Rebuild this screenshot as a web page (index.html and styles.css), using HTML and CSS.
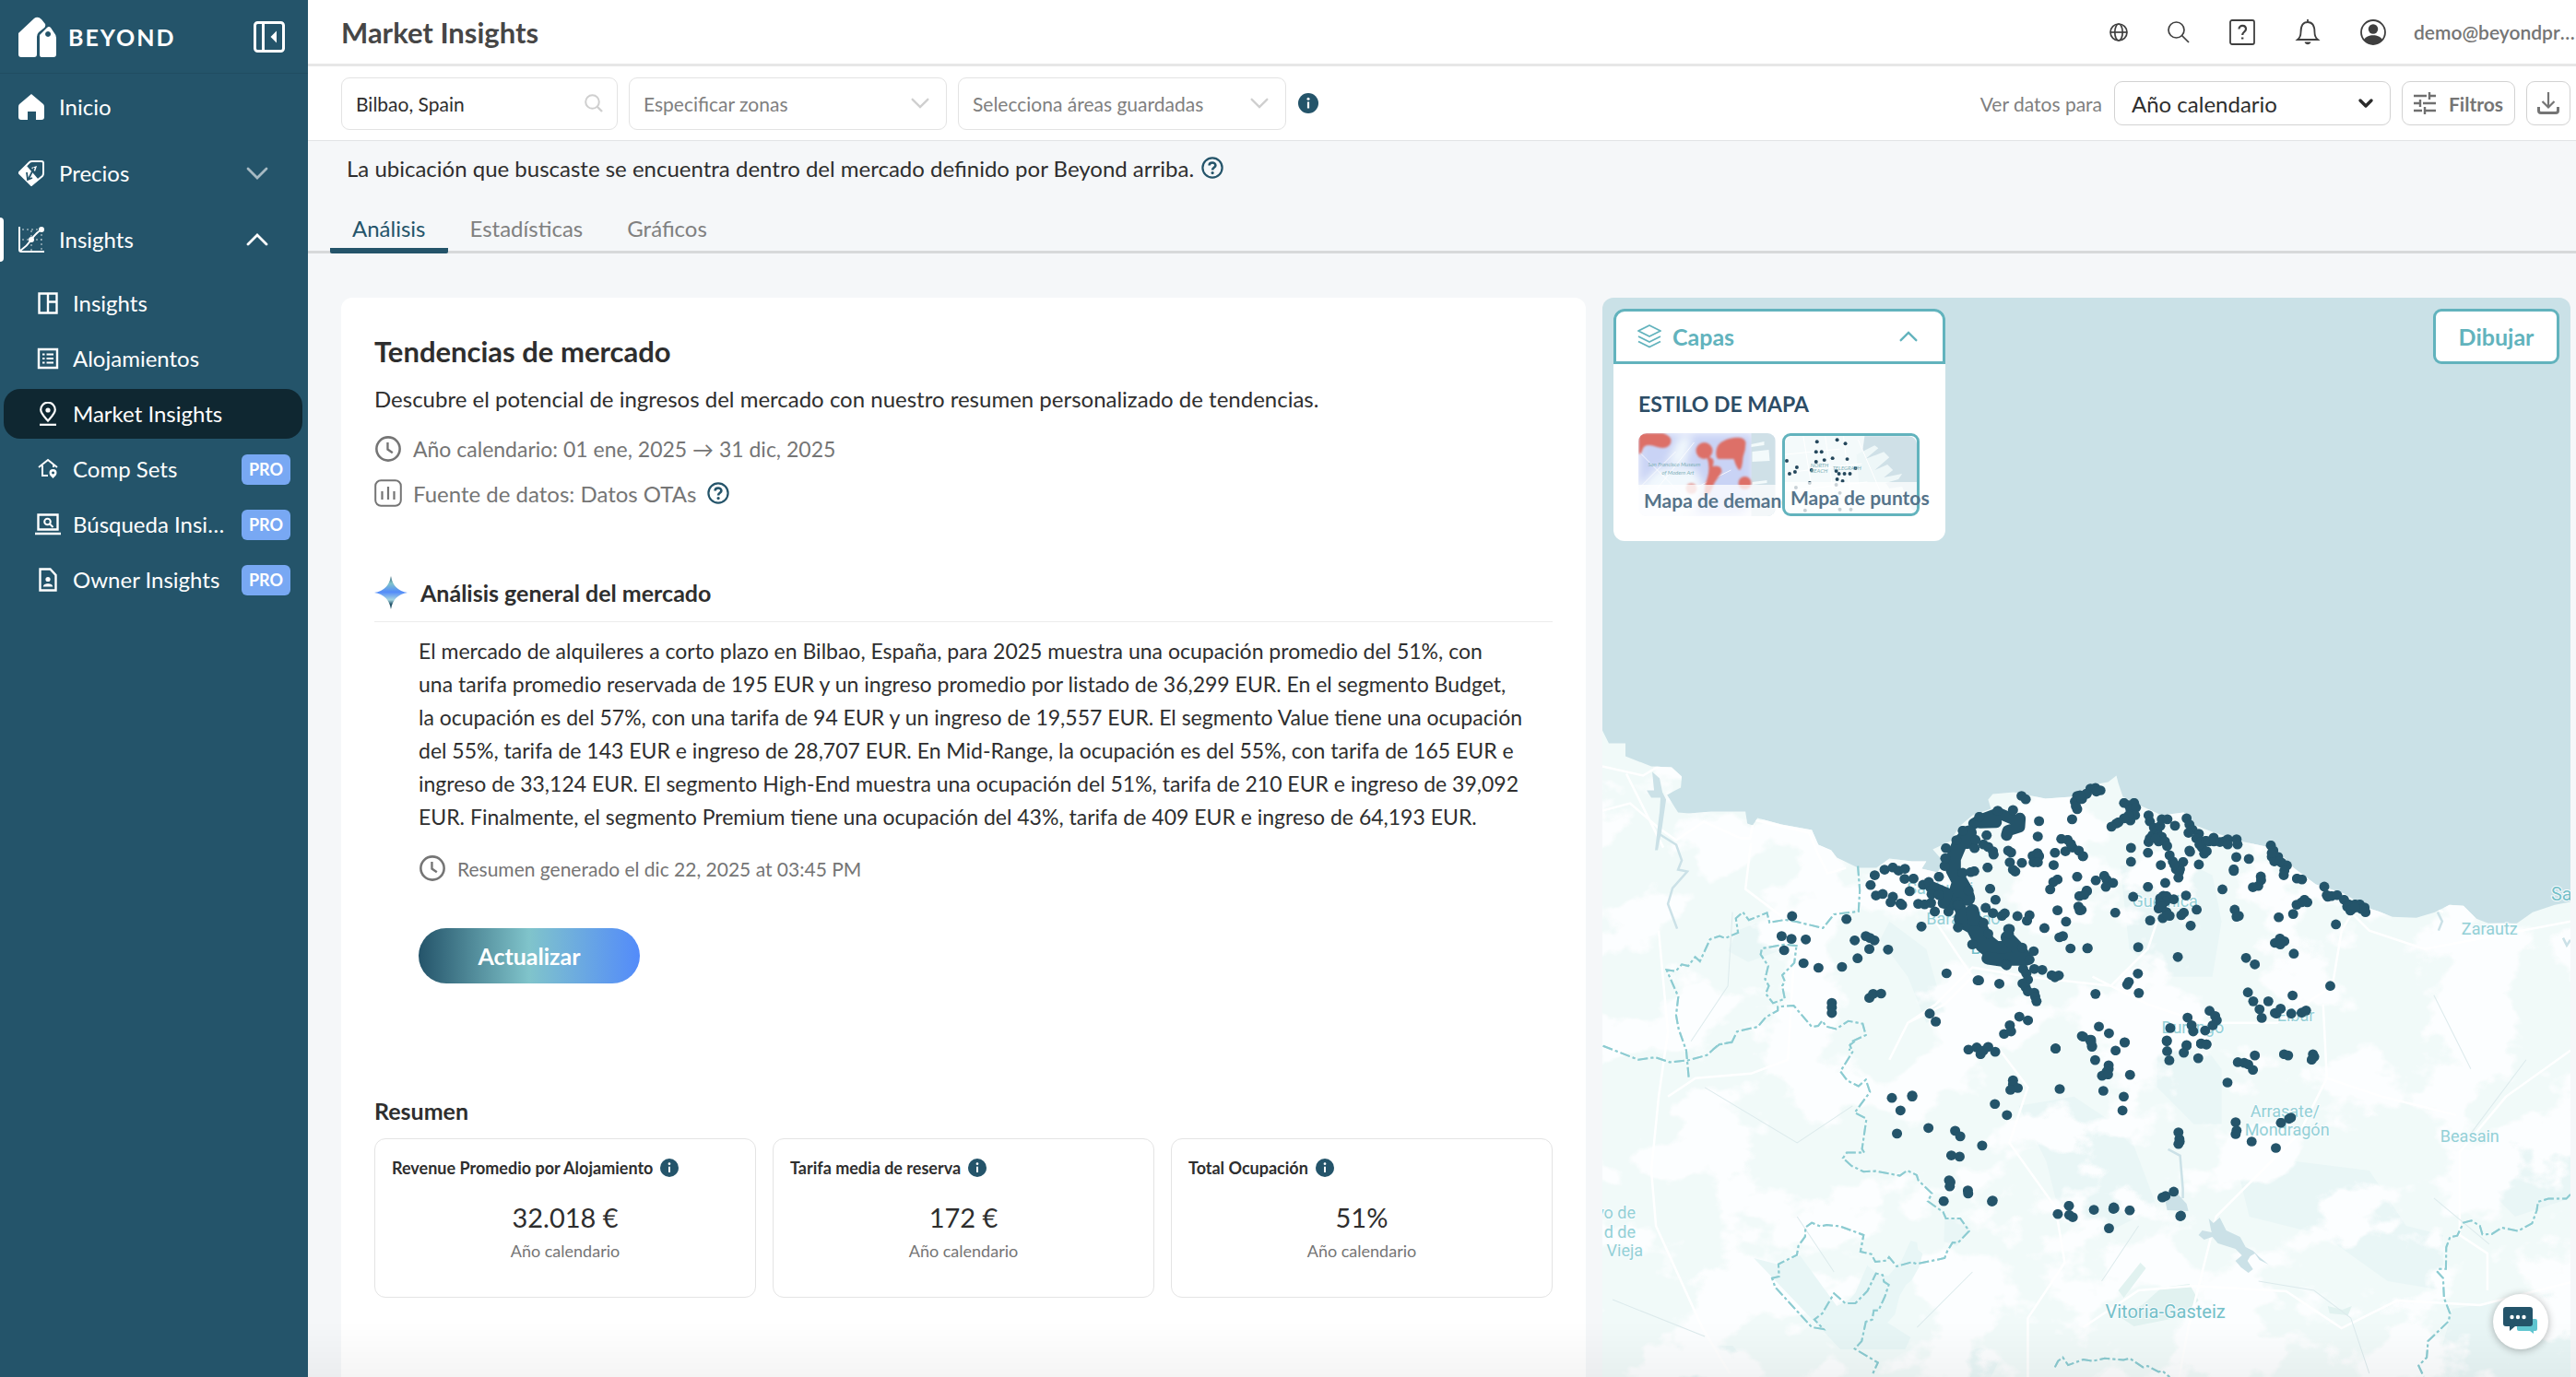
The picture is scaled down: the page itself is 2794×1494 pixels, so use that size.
FILE: index.html
```html
<!DOCTYPE html>
<html lang="es">
<head>
<meta charset="utf-8">
<title>Market Insights</title>
<link rel="stylesheet" href="styles.css">
</head>
<body>
<svg class="defs" aria-hidden="true">
  <symbol id="i-info" viewBox="0 0 22 22"><circle cx="11" cy="11" r="11" fill="#24546a"/><path d="M11 9.500v7" stroke="#fff" stroke-width="2.200"/><circle cx="11" cy="6.200" r="1.500" fill="#fff"/></symbol>
  <symbol id="i-help" viewBox="0 0 24 24"><circle cx="12" cy="12" r="10.600" fill="none" stroke="#24546a" stroke-width="2.200"/><path d="M8.600 9.600c0-4 6.800-4 6.800-.200 0 2.400-3.300 2.400-3.300 5" fill="none" stroke="#24546a" stroke-width="2.600"/><circle cx="12.100" cy="17.600" r="1.600" fill="#24546a"/></symbol>
  <symbol id="i-clock" viewBox="0 0 28 28"><circle cx="14" cy="14" r="11.800" fill="none" stroke="#757575" stroke-width="2.400"/><path d="M13.500 7.500v7l5 3.500" fill="none" stroke="#757575" stroke-width="2.200"/></symbol>
  <symbol id="i-down" viewBox="0 0 24 24"><path d="M2 7l10 10L22 7" fill="none" stroke="currentColor" stroke-width="2.800" stroke-linecap="round"/></symbol>
</svg>
<div class="app">
  <aside class="sidebar">
    <div class="brand">
      <svg class="brand-mark" viewBox="0 0 42 44"><path d="M0 18 17 2q4-3 8 1l4 5q1 3-2 5l-5 4q-2 2-2 5v19q0 3-3 3H3q-3 0-3-3z" fill="#fff"/><path fill-rule="evenodd" d="M23 20l8-8q2-2 4 0l4 6q2 2 2 5v18q0 3-3 3H25q-2 0-2-3zM32 16a3 3 0 1 0 .1 0z" fill="#fff"/></svg>
      <span class="brand-name">BEYOND</span>
      <button class="collapse" aria-label="Contraer menú"><svg viewBox="0 0 34 34"><rect x="1.500" y="1.500" width="31" height="31" rx="3" fill="none" stroke="#fff" stroke-width="3"/><path d="M10.500 2v30" stroke="#fff" stroke-width="3"/><path d="M25 10.500v13L18.500 17z" fill="#fff"/></svg></button>
    </div>
    <nav class="nav">
      <a class="nav-item" href="#"><svg viewBox="0 0 28 28"><path d="M14 0 27 11q1 1 1 3v11q0 3-3 3h-6v-9h-9v9H3q-3 0-3-3V14q0-2 1-3z" fill="#fff"/></svg><span>Inicio</span></a>
      <a class="nav-item" href="#"><svg viewBox="0 0 28 28"><path d="M1 13 12 2q1-1 3-1h10q2 0 2 2v11q0 2-1 3L14 27 1 14z" fill="none" stroke="#fff" stroke-width="2"/><path d="M1 13.500 9 6l13 15-8 6.500z" fill="#fff"/><path d="M20 6l-2 6-4-4zM9 16l5 4-5 1z" fill="#fff"/><path d="M17 8l-6 12M9 13l1 8 5-2" stroke="#24546a" stroke-width="1.800" fill="none"/></svg><span>Precios</span><svg class="chev dim"><use href="#i-down"/></svg></a>
      <a class="nav-item open" href="#"><svg viewBox="0 0 28 28"><path d="M1 0v25q0 2 2 2h25M2 26C8 22 10 20 14 14S20 6 25 3" fill="none" stroke="#fff" stroke-width="2"/><circle cx="14" cy="14" r="3" fill="#fff"/><circle cx="25" cy="3" r="3" fill="#fff"/><path d="M4 3h18M4 14h21M14 4v22M25 8v18" stroke="#fff" stroke-dasharray="2 3" fill="none" opacity=".8"/></svg><span>Insights</span><svg class="chev up"><use href="#i-down"/></svg></a>
      <a class="sub-item" href="#"><svg viewBox="0 0 24 24"><path d="M2.500 1.500h19v21h-19zM12 1.500v21M12 10.500h9.500" fill="none" stroke="#fff" stroke-width="2.400"/></svg><span>Insights</span></a>
      <a class="sub-item" href="#"><svg viewBox="0 0 24 24"><path d="M2 2h20v20H2z" fill="none" stroke="#fff" stroke-width="2.400"/><path d="M6 7.500h2.500M6 12h2.500M6 16.500h2.500M10.500 7.500H18M10.500 12H18M10.500 16.500H18" stroke="#fff" stroke-width="2.200"/></svg><span>Alojamientos</span></a>
      <a class="sub-item active" href="#"><svg viewBox="0 0 24 26"><path d="M12 20.500c-4.500-5-7.800-8-7.800-12a7.800 7.800 0 0 1 15.600 0c0 4-3.300 7-7.800 12z" fill="none" stroke="#fff" stroke-width="2.200"/><circle cx="12" cy="9" r="2.600" fill="#fff"/><path d="M3 24.800h18" stroke="#fff" stroke-width="2.200"/></svg><span>Market Insights</span></a>
      <a class="sub-item" href="#"><svg viewBox="0 0 24 24"><path d="M2 10l10-8 10 8M6 8v11h6M18 7v3" fill="none" stroke="#fff" stroke-width="2"/><path fill-rule="evenodd" d="M17.500 22c-2.500-2.500-4-3.800-4-6a4 4 0 0 1 8 0c0 2.200-1.500 3.500-4 6zM17.500 14.500a1.500 1.500 0 1 0 .1 0z" fill="#fff"/></svg><span>Comp Sets</span><b class="pro">PRO</b></a>
      <a class="sub-item" href="#"><svg class="wide" viewBox="0 0 28 24"><path d="M3.500 1.500h21v16h-21zM0 22h28" fill="none" stroke="#fff" stroke-width="2.400"/><circle cx="13.500" cy="9" r="3.300" fill="none" stroke="#fff" stroke-width="2"/><path d="M16 11.500l3.500 3.500" stroke="#fff" stroke-width="2"/></svg><span>Búsqueda Insights</span><b class="pro">PRO</b></a>
      <a class="sub-item" href="#"><svg viewBox="0 0 24 26"><path d="M3.500 1.500h11l6 6.500v16.500h-17z" fill="none" stroke="#fff" stroke-width="2.400"/><circle cx="12" cy="12.500" r="2.600" fill="#fff"/><path d="M6.800 20.500c0-4.500 10.400-4.500 10.400 0z" fill="#fff"/></svg><span>Owner Insights</span><b class="pro">PRO</b></a>
    </nav>
  </aside>

  <main class="main">
    <header class="topbar">
      <h1>Market Insights</h1>
      <div class="top-icons">
        <button aria-label="Idioma"><svg class="s20" viewBox="0 0 20 20" fill="none" stroke="#3f3f3f" stroke-width="1.700"><circle cx="10" cy="10" r="9"/><ellipse cx="10" cy="10" rx="4.200" ry="9"/><path d="M1 10h18"/></svg></button>
        <button aria-label="Buscar"><svg class="s24" viewBox="0 0 24 24" fill="none" stroke="#3f3f3f" stroke-width="1.700"><circle cx="9.500" cy="9.500" r="8.500"/><path d="M15.500 15.500 23 23"/></svg></button>
        <button aria-label="Ayuda"><svg class="s28" viewBox="0 0 28 28" fill="none" stroke="#3f3f3f" stroke-width="1.800"><rect x="1" y="1" width="26" height="26" rx="2"/><path d="M10.500 10.500c0-5 7.500-4.500 7.500 0 0 3-3.800 3-3.800 6.500" stroke-width="2.200"/><path d="M13 19.500h2.400v2H13z" fill="#3f3f3f" stroke="none"/></svg></button>
        <button aria-label="Notificaciones"><svg class="s28" viewBox="0 0 28 28" fill="none" stroke="#3f3f3f" stroke-width="1.800"><path d="M3 22c2.500-2 3.500-4 3.500-8 0-7 2.500-11 7.500-11s7.500 4 7.500 11c0 4 1 6 3.500 8zM14 0v3"/><path d="M10.500 24.500h7c-1 3.500-6 3.500-7 0z" fill="#3f3f3f" stroke="none"/></svg></button>
        <button aria-label="Cuenta"><svg class="s28" viewBox="0 0 28 28"><circle cx="14" cy="14" r="13" fill="none" stroke="#3f3f3f" stroke-width="1.800"/><circle cx="14" cy="10.500" r="5.200" fill="#3f3f3f"/><path d="M4 22c3-6.500 17-6.500 20 0-4 6.500-16 6.500-20 0z" fill="#3f3f3f"/></svg></button>
      </div>
      <a class="account" href="#">demo@beyondpricing.com</a>
    </header>

    <div class="filters">
      <label class="field search"><input type="text" value="Bilbao, Spain" aria-label="Mercado"><svg viewBox="0 0 20 20"><circle cx="8.500" cy="8.500" r="7.300" fill="none" stroke="#cfcfcf" stroke-width="2"/><path d="M13.500 13.500 19 19" stroke="#cfcfcf" stroke-width="2.400"/></svg></label>
      <label class="field zones"><select aria-label="Zonas"><option>Especificar zonas</option></select><svg><use href="#i-down"/></svg></label>
      <label class="field areas"><select aria-label="Áreas guardadas"><option>Selecciona áreas guardadas</option></select><svg><use href="#i-down"/></svg></label>
      <svg class="info"><use href="#i-info"/></svg>
      <label class="period-label" for="period">Ver datos para</label>
      <div class="field period"><select id="period"><option>Año calendario</option></select><svg viewBox="0 0 20 20"><path d="M4 7l6 6 6-6" fill="none" stroke="#2b2b2b" stroke-width="3.400" stroke-linecap="round" stroke-linejoin="round"/></svg></div>
      <button class="tool"><svg viewBox="0 0 24 24"><path d="M0 4h14M17 4h7M17 0v8M0 12h6M10 12h14M7 8v8M0 20h9M12 20h12M12 16v8" stroke="#6f6f6f" stroke-width="2.400"/></svg>Filtros</button>
      <button class="tool square" aria-label="Descargar"><svg viewBox="0 0 24 24"><path d="M12 0v16M5.500 10l6.500 6.500L18.500 10" fill="none" stroke="#757575" stroke-width="2.200"/><path d="M1.500 16v4q0 2.500 2.500 2.500h16q2.500 0 2.500-2.500v-4" fill="none" stroke="#757575" stroke-width="3"/></svg></button>
    </div>

    <p class="notice">La ubicación que buscaste se encuentra dentro del mercado definido por Beyond arriba.<svg class="help"><use href="#i-help"/></svg></p>

    <nav class="tabs"><a class="tab on" href="#">Análisis</a><a class="tab" href="#">Estadísticas</a><a class="tab" href="#">Gráficos</a></nav>

    <div class="content">
      <section class="card">
        <h2>Tendencias de mercado</h2>
        <p class="lead">Descubre el potencial de ingresos del mercado con nuestro resumen personalizado de tendencias.</p>
        <p class="meta date"><svg><use href="#i-clock"/></svg>Año calendario: 01 ene, 2025 → 31 dic, 2025</p>
        <p class="meta"><svg viewBox="0 0 30 30"><rect x="1.200" y="1.200" width="27.600" height="27.600" rx="6" fill="none" stroke="#757575" stroke-width="2"/><path d="M8.500 13v9M15 8v14M21.500 13v9" stroke="#757575" stroke-width="2.200"/></svg>Fuente de datos: Datos OTAs<svg class="help"><use href="#i-help"/></svg></p>

        <div class="section-head">
          <svg viewBox="0 0 36 36"><defs><linearGradient id="star" x2="0" y2="1"><stop offset="0" stop-color="#24546a"/><stop offset=".22" stop-color="#80c4cb"/><stop offset=".48" stop-color="#538bfa"/><stop offset=".72" stop-color="#a5d5e0"/><stop offset=".85" stop-color="#24546a"/></linearGradient></defs><path d="M18 0Q20.500 15.500 36 18 20.500 20.500 18 36 15.500 20.500 0 18 15.500 15.500 18 0z" fill="url(#star)"/></svg>
          <h3>Análisis general del mercado</h3>
        </div>
        <div class="analysis">
          <p class="summary">El mercado de alquileres a corto plazo en Bilbao, España, para 2025 muestra una ocupación promedio del 51%, con<br>una tarifa promedio reservada de 195 EUR y un ingreso promedio por listado de 36,299 EUR. En el segmento Budget,<br>la ocupación es del 57%, con una tarifa de 94 EUR y un ingreso de 19,557 EUR. El segmento Value tiene una ocupación<br>del 55%, tarifa de 143 EUR e ingreso de 28,707 EUR. En Mid-Range, la ocupación es del 55%, con tarifa de 165 EUR e<br>ingreso de 33,124 EUR. El segmento High-End muestra una ocupación del 51%, tarifa de 210 EUR e ingreso de 39,092<br>EUR. Finalmente, el segmento Premium tiene una ocupación del 43%, tarifa de 409 EUR e ingreso de 64,193 EUR.</p>
          <p class="stamp"><svg><use href="#i-clock"/></svg>Resumen generado el dic 22, 2025 at 03:45 PM</p>
          <button class="refresh">Actualizar</button>
        </div>

        <h3 class="sum-title">Resumen</h3>
        <div class="stats">
          <article class="stat"><h4>Revenue Promedio por Alojamiento<svg><use href="#i-info"/></svg></h4><strong>32.018 €</strong><small>Año calendario</small></article>
          <article class="stat"><h4>Tarifa media de reserva<svg><use href="#i-info"/></svg></h4><strong>172 €</strong><small>Año calendario</small></article>
          <article class="stat"><h4>Total Ocupación<svg><use href="#i-info"/></svg></h4><strong>51%</strong><small>Año calendario</small></article>
        </div>
      </section>

      <section class="map" aria-label="Mapa">
        <svg class="map-canvas" viewBox="0 0 1049 1171" preserveAspectRatio="xMinYMin slice">
          <defs>
            <clipPath id="land"><path id="coast" d="M1739 793l7 14h18v14l28 11 22 1 11 10-1 12-8 4-7 4 12 19 12 1 24-2h37l2 13 6 2 5-8 26 7 33 6 7 16 14 6 6 8 23 11h20l14-10 24 3h16l-5 8 17 4 8-10-13-15 19-9 10-16 14-12 20-7-3-10 5-6 23-2 34 7 28-2 23-13 17-3 9-7 2 8 5 15 20 10 22 10 24-3 10 13 21 8 30 10 28 6 13 4 17 19 24 18 31 10 24 15 13 4 15 6 26 1 20-6 16-8 15 1 14 14 13 5h31l17-12 24-8 17-3V1496H1739z"/></clipPath>
            <filter id="relief" x="0" y="0" width="100%" height="100%"><feTurbulence type="fractalNoise" baseFrequency=".011 .014" numOctaves="5" seed="11"/><feColorMatrix values="0 0 0 0 .974  0 0 0 0 .988  0 0 0 0 .996  14 0 0 0 -7"/></filter>
            <marker id="d" markerUnits="userSpaceOnUse" markerWidth="34" markerHeight="34" viewBox="0 0 34 34" refX="17" refY="17"><circle cx="17" cy="17" r="16" fill="#24546a"/></marker>
          </defs>
          <g transform="translate(-1739 -324)">
            <use href="#coast" fill="#f1faf9"/>
            <g clip-path="url(#land)">
              <g fill="#e9f6f6">
                <path d="M1885 1010l20-8 30-2 22 0 20 14-30 12-50 18-22-12zM2050 1000l40 30 20 70-20 10-20-50-30-40zM2300 940l60-10 40 20 10 50-10 60-50 0-40-30zM2340 1130l40-10 30 40 0 60-30 0-40-40zM2190 1200l60-10 60 40 30 80-60 30-50-40-10-40zM2430 1280l60-20 80 10 40 60 40 10 0 60-60-10-70-50-80-20zM2700 1240l88-10v70l-60 20-30-30zM2690 1060l30-35 10 15-20 55-20-20z"/>
                <path d="M1820 1460l60 0 30 34h-90zM2110 1322h18l10 12-15 18-14-5zM2120 1470l30-8 20 12-10 20h-30zM2660 1420l128-20v94h-148z"/>
              </g>
              <rect x="1739" y="780" width="1049" height="716" filter="url(#relief)"/>
              <path d="M1930 1372l23-10 40 55 14-7 6-7 13-30 12 10 11 1 14-16 10-22 7 2 1 8 5 4-4 15-8 14-6 5-7 12-5 20-8 9 25 16-6 13h-70l-50-53-44-46z" fill="#e8f6f6"/>
              <g fill="#e1f2f0"><path d="M2298 1400l24-30 6 6-24 32zM2325 1415l20-18 30-4 10 18-20 18-50 10-15-10zM2525 1417l16 4 10-4-4 10-20-2z"/></g>
              <g fill="none" stroke="#fff" stroke-width="2.500">
                <path d="M1739 832l44 10 20-12M1739 880l30-8 30 26 20 14 30-20 40 18 10 0 4-20 60 14 10 24 10 20 20-6M1900 915l-6 50 40 30M1805 920l-40-80M1800 1010l10 110-10 70-8 80 5 60 50 110 30 50M1810 1190l30-20 60-5 40-15 6-100"/>
                <path d="M2100 1000l40 60-30 30-40 20-20 40M2340 1000l-10 30-40 40-90-10-60-10-40 40-30 20M2270 1060l60 30 60 20 80 0 60-40 10-60 30-50 40 10 40 20M2540 980l30 30 60 20 158-30M2520 1090l4 80-30 60-90 90-30 120-10 54M2170 1140l30 40-20 60 50 70 10 60-40 60 0 100-10 40M2524 1170l60 20 80 20M2788 1140l-70 50-50 60 0 90 30 20 0 40M2260 1440l60-40 60-5 100 6 60 40 60-30 90 5 158-40"/>
              </g>
              <g fill="none" stroke="#dceaec" stroke-width="1"><path d="M1880 990l-5 80-40 60M1990 1380l-40-60M1850 1180l100 60 60-40M2640 1080l40 80M2740 1150l-60 80M2640 1300l60 50M2320 1330l-40 60M2450 1390l60 10 40 30 20 60M1750 1410l100 40M2080 1440l60-60"/></g>
            </g>
            <g fill="#cbe1e7">
              <path d="M1793 838l8 7 3 15 4 8-5 35-4 20h-3l5-42 1-15-10 0-5-8 8 0z"/>
              <path d="M2396 1322l5 5 7-6 7 14 15 7 6 11 8 4 7 7 10 8-10-5-5-7-5 3-3 5 6 9-5 4-8-6-6-7 7-6-7-7-19-6-6-7-9 3-6-5 4-5 10 2z"/>
              <path d="M2348 1299l14-4 10 11 2 8-23-1z"/>
            </g>
            <path d="M1800 905l19 12 6 17-4 10 10 2-16 18-5 17 10 27M2352 1247l13 7 3 36v10M2644 990l5 10-4 10M2780 1018l4 8 4-6" fill="none" stroke="#cbe1e7" stroke-width="2.500"/>
            <g fill="none">
              <g transform="translate(1730 780) scale(.3444 .3333)" class="limit">
                <path d="M830 480l6 80-4 68-77 9-35 45-80-20-40-7-48 9-8-32-57 24-19-26-22 20 7 47-41 18-17-7-30 10-32 72-15-14-22 29-20-5-19 22-29-4 37 87-7 60 8 45 24 70 8 90M640 740l-40-5-72 13-4 20 24 37-10 43 12 22-10 25 23 31 37-14-8-42 8-15-8-20 38-40 6-50M375 1076l20-16 38-6 17-36 65-15 25-31 38-22v-12l50-4 57 69 20-3 13-17 12 19 32 8 38-26 45 9 10 37-47 22-5 28"/>
              </g>
              <g transform="translate(1730 1130) scale(.3444 .3333)" class="limit">
                <path d="M28 15l112 45 52-8 46 16 57-6 60-17 35-33 45-10M820 0l-15 12 8 23-38 63 22 30 35 18 23-21 13 40-48 67 37 20-14 98 7 12h-55l-12 18 27 25 38 19 37-2 77 15 23-17 30 15 5 17 43 43-13 25 48 35 9 21h45l28 41-35 38-17-1-18 31-7 20-88 19-15-6-48 14-24-30-8 11-35 4-13-25-34-8 10-54-73-28-43-5-20 5-27-12-20 15-1 30-21 30-5 30-58 30 2 40-22 5 10 30 115 130 37 6-29-31 25-20 37-65 35 32h32l38-40 27-57 21 5 4 22 15 10-12 38-20 45h-15l-5 30-20 7-13 63-22 25 73 45-18 40"/>
              </g>
              <g transform="translate(2260 1130) scale(.3406 .3333)" class="limit">
                <path d="M1550 498l-13 14h-57l-33 10-4 28-15 42-45 25-51-11-32 21-30 1-8-28-27-17-25 7-20 42-23 5-12 33-1 70h-24l-3 10 18 20 3 65 19 50-4 25-66 65-4 53-26 27 16 35M-90 1060l10-20 15-12 17 25 48-18 30 5 38-9 60 5 20-5 42 29 15-4 35 19 12-3 23 20"/>
              </g>
            </g>
            <g class="place">
              <text x="2069" y="970">Santurtzi</text><text x="2090" y="1003">Barakaldo</text><text x="2313" y="984">Guernica</text><text x="2345" y="1121">Durango</text><text x="2470" y="1108">Eibar</text><text x="2670" y="1014">Zarautz</text><text x="2441" y="1212">Arrasate/</text><text x="2435" y="1232">Mondragón</text><text x="2647" y="1239">Beasain</text>
              <text x="1775" y="1322" text-anchor="end">yo de</text><text x="1775" y="1343" text-anchor="end">d de</text><text x="1783" y="1363" text-anchor="end">Vieja</text>
              <text class="city" x="2138" y="1035">Bilbao</text><text class="city" x="2767" y="977">Sa</text><text class="city" x="2284" y="1430">Vitoria-Gasteiz</text>
            </g>
            <g transform="translate(1730 780) scale(.3444 .3333)">
              <g fill="none" stroke="#24546a" stroke-linecap="round" stroke-linejoin="round">
                <path stroke-width="36" d="M1318 328l-45-20-58 22-20 12M1215 340l50-2M1340 325l-2 28-36 12-4 15"/>
                <path stroke-width="48" d="M1180 372l-30 35-20 50 0 35 20 40-15 50-10 20M1155 400l22 0M1140 510l25 45 10 30"/>
                <path stroke-width="38" d="M1060 548l50 22-10 30M1145 600l20 50"/>
                <path stroke-width="66" d="M1165 652l35 20 30 60 30 25 60 0"/>
                <path stroke-width="42" d="M1190 625l5 30M1300 712l40 43 20 28-60 0M1240 780l55 8"/>
              </g>
              <polyline class="dots" points="623,643 794,653 590,708 621,717 666,719 598,754 659,796 706,811 780,808 829,780 820,722 855,708 868,714 882,722 866,750 925,752 748,925 748,940 748,958 866,909 878,896 903,895 1109,829 1207,852 1211,852 1275,863 1056,960 1075,986 1338,970 1365,982 1308,998 1290,1026 1312,1018 883,510 870,542 914,492 940,485 958,495 978,489 977,522 1005,521 993,562 887,576 908,571 940,580 933,598 964,602 969,607 1030,677 1020,603 1040,605 1060,600 1072,628 1035,541 1053,532 1068,550 1085,515 1062,572"/>
              <polyline class="dots" points="1345,252 1358,263 1318,298 1400,334 1396,384 1235,380 1238,485 1504,328 1246,554 1263,590 1232,616 1255,633 1283,642 1292,634 1332,643 1370,640 1362,658 1458,624 1485,661 1417,682 1475,708 1464,712 1499,748 1552,748 1520,515 1458,524 1445,532 1435,556 1550,560 1527,578 1524,612 1528,624 1446,477 1450,437 1346,470 1303,430 1312,436 1308,468 1318,492 1325,498 1380,447 1395,438 1400,448 1383,468 1396,468 1470,392 1490,395 1483,432 1505,420 1525,430 1538,448 1500,408 1520,252 1550,245 1513,270 1520,295 1516,285 1535,262 1562,228"/>
              <polyline class="dots" points="1107,422 1197,422 1225,410 1240,418 1255,432 1257,443 1212,320 1270,300 1160,365 1140,396 1103,480 1105,455 1160,502 1185,500 1196,497 1115,628 1085,575 1200,395 1190,735 1383,757 1303,685 1308,685 1305,700 1347,745 1145,680 1225,665 1240,700 1295,800 1298,803 1370,785 1350,815 1385,815 1410,818 1440,835 1462,836 1450,842 1360,830 1365,850 1348,862 1358,875 1365,888 1385,892 1388,905 1392,920 1535,1033 1560,1045 1452,1073 1145,605 1178,560"/>
            </g>
            <g transform="translate(2260 780) scale(.3406 .3333)">
              <polyline class="dots" points="39,226 55,234 42,238 10,245 -5,262 -10,250 130,275 145,282 162,275 150,295 168,290 165,315 150,332 145,315 130,325 112,338 105,342 90,352 208,315 212,335 225,355 208,402 212,390 220,380 235,365 240,380 250,385 240,400 260,400 267,415 230,390 245,350 250,328 268,328 292,349 329,325 338,345 348,362 335,372 368,375 360,390 375,400 378,420 385,440 393,432 370,410 390,398 415,388 400,400 416,400 435,402 448,400 460,393 460,410 488,393 491,410"/>
              <polyline class="dots" points="152,421 152,466 206,437 247,477 338,430 340,434 368,475 275,445 285,465 300,480 318,467 308,490 305,500 303,518 295,490 290,475 487,451 527,457 479,491 479,496 443,556 565,514 566,526 557,545 540,549 597,413 605,430 600,450 620,450 632,470 648,478 640,495 638,510 608,465 625,465 600,438 680,521 696,524 767,547 775,575 778,580 790,578 808,575 830,590 845,605 840,612 865,605 850,625 853,622 880,605 895,615 898,630 885,620 865,615"/>
              <polyline class="dots" points="804,670 622,647 668,636 679,606 704,590 713,598 695,598 482,622 488,645 495,642 626,716 610,730 640,725 627,735 670,765 518,779 546,800 786,870 666,901 524,891 541,920 589,920 561,946 568,974 610,958 615,960 628,944 662,960 695,957 709,950 175,744 301,776 174,830 145,857 140,866 177,893 39,896 14,747 102,632 40,527 67,512 75,525 95,535 72,548 12,562 3,574 -1,448 159,580 206,548 261,535 288,588 327,576 361,622 342,674 213,657 312,640 320,632"/>
              <polyline class="dots" points="255,577 245,585 265,578 262,595 245,600 240,618 250,612 265,630 275,642 253,650 268,640 332,973 402,951 420,968 425,982 412,998 388,1015 345,998 350,1018 277,1007 266,1047 329,1062 375,1057 392,1060 50,1002 82,1024 132,1053 25,1045 28,1065 0,1035 -5,623"/>
            </g>
            <g transform="translate(1730 1130) scale(.3444 .3333)">
              <polyline class="dots" points="937,184 1001,176 1001,180 964,225 953,300 1052,282 1136,291 1152,309 1221,339 1124,371 1150,375 1117,452 1121,458 1119,472 1176,485 1177,495 1100,520 1252,521 1254,518 1178,27 1204,20 1216,42 1225,30 1240,18 1262,34 1452,24 1318,127 1318,140 1333,152 1310,158 1261,204 1299,240 1465,155 1459,562 1494,535 1495,565 1506,572"/>
            </g>
            <g transform="translate(2260 1130) scale(.3406 .3333)">
              <polyline class="dots" points="28,18 25,2 38,61 103,30 132,4 81,78 81,90 75,98 60,112 72,105 79,108 149,109 64,161 129,180 125,225 266,0 267,32 274,62 329,14 320,37 366,55 375,8 392,10 546,46 492,68 512,70 525,75 540,93 459,134 639,42 652,46 731,42 735,50 727,60 303,296 306,318 307,326 303,334 485,263 488,290 485,302 536,326 613,347 629,265 655,252 661,248 288,489 262,503 252,508 309,569 311,567 34,548 97,540 99,543 96,545 148,550 82,608"/>
            </g>
          </g>
        </svg>
        <div class="layers">
          <button class="layers-head"><svg class="stack" viewBox="0 0 26 26" fill="none" stroke="#62b3bd" stroke-width="1.900" stroke-linejoin="round"><path d="M13 1l12 6-12 6L1 7zM1 13l12 6 12-6M1 18.500l12 6 12-6"/></svg>Capas<svg class="chev up"><use href="#i-down"/></svg></button>
          <div class="layers-body">
            <h4>ESTILO DE MAPA</h4>
            <div class="tiles">
              <button class="tile"><svg viewBox="0 0 148 90"><defs><filter id="soft"><feGaussianBlur stdDeviation="5"/></filter><filter id="edge"><feGaussianBlur stdDeviation="1.200"/></filter></defs><rect width="148" height="90" fill="#f4f6fd"/><g filter="url(#soft)"><path d="M0 0h124v50q0 40-20 40H50L0 60z" fill="#c9d3f5"/><path d="M20 38h40l10 20-10 30H20L0 60zM44 4l14 0-8 30-20 0z" fill="#f1f8fd"/></g><path d="M0 60L40 20M20 60L60 10M60 60L100 40M0 20l60 60" stroke="#fff" stroke-width=".800"/><path d="M122 0h26v90h-26z" fill="#cfe0e7"/><path d="M123 20l18-2 1 12-19 1zM122 12l14-3v4l-14 2zM123 53l16-2v3l-16 2z" fill="#f3fafb"/><g fill="#dd7068" filter="url(#edge)"><path d="M0 0h26q12 4 8 12-4 6-14 3Q6 10 4 18q-2 6-4 4z"/><circle cx="71" cy="19" r="9"/><path d="M84 20q0-10 14-14 16-4 18 4 0 8-3 16-1 14-4 14-3-2-6-12-10 0-17 0-3-3-2-8zM74 26q10 0 6 10 10-2 10 6l-8 12q-5 14-10 14-2-8 2-18 4-12 0-24z"/><circle cx="115" cy="54" r="7"/><circle cx="57" cy="60" r="6" opacity=".6"/></g><text x="10" y="36">San Francisco Museum</text><text x="25" y="45">of Modern Art</text></svg><span>Mapa de demanda</span></button>
              <button class="tile selected"><svg viewBox="0 0 144 84"><rect width="144" height="84" fill="#f4fafb"/><path d="M87 0h57v84l-30-24L84 22z" fill="#cfe0e7"/><path d="M78 20l20-10 4 3-14 12 20-8 6 6-16 14 14-6 6 6-10 8 20-4-4 6-14 4 4 6 14-2 12 29H84z" fill="#eef7f8"/><path d="M0 20l60-6M0 40l84-10M0 60l90-10M20 0l14 84M44 0l12 84M64 0l10 84M80 4l30 70" stroke="#fff" stroke-width="1" fill="none"/><g fill="#24475c"><circle cx="35" cy="6" r="2"/><circle cx="57" cy="4" r="2"/><circle cx="66" cy="8" r="2"/><circle cx="34" cy="17" r="2"/><circle cx="40" cy="17" r="2"/><circle cx="2" cy="27" r="2"/><circle cx="34" cy="28" r="2"/><circle cx="43" cy="26" r="2"/><circle cx="52" cy="24" r="2"/><circle cx="68" cy="25" r="2"/><circle cx="13" cy="34" r="2"/><circle cx="11" cy="39" r="2"/><circle cx="5" cy="41" r="2"/><circle cx="29" cy="37" r="2"/><circle cx="77" cy="35" r="2"/><circle cx="56" cy="38" r="2"/><circle cx="59" cy="41" r="2"/><circle cx="65" cy="41" r="2"/><circle cx="71" cy="41" r="2"/><circle cx="57" cy="47" r="2"/><circle cx="63" cy="49" r="2"/><circle cx="27" cy="51" r="2"/><circle cx="12" cy="56" r="2"/><circle cx="56" cy="53" r="2"/><circle cx="60" cy="62" r="2"/><circle cx="22" cy="81" r="2"/><circle cx="60" cy="80" r="2"/><circle cx="72" cy="80" r="2"/></g><text x="28" y="34">NORTH</text><text x="28" y="40">BEACH</text><text x="52" y="37">TELEGRAPH</text></svg><span>Mapa de puntos</span></button>
            </div>
          </div>
        </div>
        <button class="draw">Dibujar</button>
      </section>
    </div>
  </main>
</div>
<button class="chat" aria-label="Chat"><svg viewBox="0 0 38 32"><path d="M15 13h20q2 0 2 2v9q0 2-2 2h-2v3l-4-3H17q-2 0-2-2z" fill="#5fc5d0"/><path d="M3 0h26q3 0 3 3v15q0 3-3 3H13l-6 5v-5H3q-3 0-3-3V3q0-3 3-3z" fill="#24546a"/><circle cx="9.500" cy="11" r="2.200" fill="#fff"/><circle cx="16" cy="11" r="2.200" fill="#fff"/><circle cx="22.500" cy="11" r="2.200" fill="#fff"/></svg></button>
</body>
</html>
```
FILE: styles.css
```css
* { box-sizing: border-box; }
body { margin: 0; font-family: Lato, "Open Sans", sans-serif; font-size: 24px; color: #2e2e2e; background: #f5f7f9; }
h1, h2, h3, h4, p { margin: 0; }
a { color: inherit; text-decoration: none; }
button { font: inherit; padding: 0; border: 0; background: none; cursor: pointer; }
svg { display: block; flex: none; }
.defs { position: absolute; width: 0; height: 0; }
.app { display: grid; grid-template-columns: 334px minmax(0, 1fr); min-height: 100vh; }
.app::after { content: ""; position: fixed; inset: auto 0 0 334px; height: 60px; background: linear-gradient(transparent, rgba(0, 0, 0, .04)); pointer-events: none; }

/* Sidebar */
.sidebar { background: #24546a; color: #fff; }
.brand { display: flex; align-items: center; height: 80px; padding: 0 25px 0 20px; border-bottom: 1px solid #204d61; }
.brand-mark { width: 42px; height: 44px; }
.brand-name { margin-left: 12px; font-size: 25px; font-weight: 700; letter-spacing: 2px; }
.collapse { margin-left: auto; }
.collapse svg { width: 34px; height: 34px; }
.nav-item { display: flex; align-items: center; gap: 16px; height: 72px; padding: 0 43px 0 20px; position: relative; }
.nav-item > svg { width: 28px; height: 28px; }
.nav-item span, .sub-item span { padding-bottom: 2px; }
.nav-item .chev { width: 24px; height: 24px; margin-left: auto; }
.dim { opacity: .6; }
.up { transform: rotate(180deg); }
.open::before { content: ""; position: absolute; left: 0; top: 12px; width: 4px; height: 48px; background: #fff; border-radius: 0 6px 6px 0; }
.sub-item { display: flex; align-items: center; height: 54px; margin: 0 6px 6px 4px; padding: 0 13px 0 36px; border-radius: 18px; }
.open + .sub-item { margin-top: 6px; }
.sub-item > svg { width: 24px; height: 26px; margin-right: 15px; }
.sub-item > svg.wide { width: 28px; margin: 0 13px 0 -2px; }
.sub-item span { flex: 1; min-width: 0; overflow: hidden; text-overflow: ellipsis; white-space: nowrap; }
.active { background: #0f2731; }
.pro { margin-left: 12px; width: 53px; height: 33px; border-radius: 6px; background: #78a8f3; font-size: 18px; line-height: 32px; text-align: center; }

/* Top bar */
.main { display: flex; flex-direction: column; min-width: 0; background: #f5f7f9; }
.topbar { display: flex; align-items: center; height: 72px; padding-left: 36px; background: #fff; border-bottom: 3px solid #e7e7e7; }
h1 { font-size: 31px; font-weight: 700; color: #464646; }
.top-icons { display: flex; align-items: center; gap: 43px; margin-left: auto; }
.s20 { width: 20px; height: 20px; }
.s24 { width: 24px; height: 24px; }
.s28 { width: 28px; height: 28px; }
.account { width: 176px; margin-left: 30px; overflow: hidden; text-overflow: ellipsis; white-space: nowrap; font-size: 21px; font-weight: 600; color: #757575; }

/* Filters */
.filters { display: flex; align-items: center; height: 81px; padding: 0 6px 0 36px; background: #fff; border-bottom: 1px solid #e2e4e6; }
.field { display: grid; align-items: center; height: 57px; border: 1px solid #e3e3e3; border-radius: 9px; background: #fff; }
.field > * { grid-area: 1 / 1; }
.field input, .field select { width: 100%; height: 100%; padding: 0 44px 0 15px; border: 0; background: none; font: inherit; font-size: 21px; color: #2e2e2e; appearance: none; outline: 0; text-overflow: ellipsis; }
.field svg { justify-self: end; width: 20px; height: 20px; margin-right: 15px; color: #cfcfcf; pointer-events: none; }
.search { width: 300px; }
.zones { width: 345px; margin-left: 12px; }
.areas { width: 356px; margin-left: 12px; }
.zones select, .areas select { color: #808080; }
.zones svg, .areas svg { margin-right: 18px; }
.info { width: 22px; height: 22px; margin-left: 13px; }
.period-label { margin-left: auto; font-size: 21px; color: #808080; }
.period { width: 300px; height: 48px; margin-left: 13px; border-color: #d2d2d2; }
.period select { padding-left: 18px; font-size: 24px; }
.period svg { margin-right: 16px; }
.tool { display: flex; align-items: center; justify-content: center; gap: 14px; width: 123px; height: 48px; margin-left: 12px; border: 1px solid #d2d2d2; border-radius: 9px; font-size: 21px; font-weight: 700; color: #757575; }
.tool svg { width: 24px; height: 24px; }
.square { width: 48px; }

/* Notice and tabs */
.notice { display: flex; align-items: center; gap: 8px; height: 58px; padding-left: 42px; font-size: 24px; }
.help { width: 24px; height: 24px; }
.tabs { display: flex; align-items: flex-end; height: 64px; padding-left: 24px; border-bottom: 3px solid #d7d9da; }
.tab { height: 52px; padding: 0 24px; margin-bottom: -3px; line-height: 50px; color: #808080; }
.tab.on { border-bottom: 6px solid #24546a; border-radius: 2px; color: #24546a; }

/* Content */
.content { flex: 1; display: grid; grid-template-columns: 9fr 7fr; gap: 18px; padding: 48px 6px 0 36px; }
.card { padding: 38px 36px 60px; background: #fff; border-radius: 12px 12px 0 0; }
h2 { font-size: 31px; line-height: 40px; }
.lead { margin-top: 14px; font-size: 24px; line-height: 36px; }
.meta { display: flex; align-items: center; height: 48px; color: #757575; }
.date { margin-top: 12px; font-size: 23px; }
.meta > svg { width: 30px; height: 30px; margin-right: 12px; }
.meta > svg.help { width: 24px; height: 24px; margin-left: 12px; }
.section-head { display: flex; align-items: center; gap: 14px; height: 64px; margin-top: 52px; border-bottom: 1px solid #ececec; }
.section-head svg { width: 36px; height: 36px; }
h3 { font-size: 25px; }
.analysis { padding: 13px 0 0 48px; }
.summary { font-size: 23px; line-height: 36px; }
.stamp { display: flex; align-items: center; gap: 12px; height: 36px; margin-top: 20px; font-size: 21px; color: #757575; }
.stamp svg { width: 30px; height: 30px; }
.refresh { width: 240px; height: 60px; margin-top: 47px; border-radius: 30px; background: linear-gradient(90deg, #24546a, #80c4cb 50%, #538bfa); color: #fff; font-size: 25px; font-weight: 700; }
.sum-title { margin-top: 120px; line-height: 36px; }
.stats { display: grid; grid-template-columns: repeat(3, 1fr); gap: 18px; margin-top: 12px; }
.stat { display: flex; flex-direction: column; align-items: center; height: 173px; padding: 17px 18px; border: 1px solid #e4e4e4; border-radius: 12px; }
.stat h4 { align-self: flex-start; display: flex; align-items: center; gap: 8px; font-size: 18px; line-height: 28px; }
.stat h4 svg { width: 20px; height: 20px; }
.stat strong { margin-top: 20px; font-size: 29px; line-height: 40px; font-weight: 400; }
.stat small { margin-top: 2px; font-size: 18px; line-height: 28px; color: #757575; }

/* Map */
.map { position: relative; display: flex; align-items: flex-start; justify-content: space-between; padding: 12px; border-radius: 12px 12px 0 0; background: #cae1e7; overflow: hidden; }
.map-canvas { position: absolute; inset: 0; width: 100%; height: 100%; }
.limit { stroke: #8ccbd1; stroke-width: 6; stroke-dasharray: 32 9 9 9; filter: drop-shadow(0 0 2px #b8e2e4); }
.place text { font-family: Roboto, "Open Sans", sans-serif; font-size: 18px; fill: #93d0d6; stroke: #f8fcfe; stroke-width: 2px; paint-order: stroke; }
.place .city { font-size: 20px; fill: #74c0c8; }
.dots { fill: none; marker: url(#d); }
.layers { position: relative; width: 360px; border-radius: 12px; background: #fff; }
.layers-head { display: flex; align-items: center; gap: 12px; width: 100%; height: 60px; padding: 0 27px 0 23px; border: 3px solid #62b3bd; border-radius: 12px 12px 0 0; font-size: 25px; font-weight: 700; color: #62b3bd; }
.stack { width: 26px; height: 26px; }
.layers-head .chev { width: 20px; height: 20px; margin-left: auto; }
.layers-body { padding: 28px 27px 27px; }
.layers-body h4 { font-size: 23px; line-height: 30px; font-weight: 700; color: #2c4d66; }
.tiles { display: flex; gap: 7px; margin-top: 17px; }
.tile { position: relative; width: 149px; height: 90px; border-radius: 9px; }
.tile svg { width: 100%; height: 100%; border-radius: 9px; }
.tile text { font-size: 6px; font-style: italic; fill: #7fb0b8; }
.tile span { position: absolute; left: 0; right: 0; bottom: 0; height: 34px; padding-left: 6px; border-radius: 0 0 9px 9px; background: rgba(255, 255, 255, .75); font-size: 21px; line-height: 34px; font-weight: 700; text-align: left; white-space: nowrap; color: #56748a; }
.tile.selected { border: 3px solid #62b3bd; background: #fff; }
.draw { position: relative; width: 137px; height: 60px; border: 3px solid #62b3bd; border-radius: 9px; background: #fff; font-size: 25px; font-weight: 700; color: #62b3bd; }
.chat { position: fixed; right: 30px; bottom: 30px; display: grid; place-items: center; width: 60px; height: 60px; border-radius: 50%; background: #fff; box-shadow: 0 1px 8px rgba(0, 0, 0, .3); }
.chat svg { width: 38px; height: 32px; }
```
